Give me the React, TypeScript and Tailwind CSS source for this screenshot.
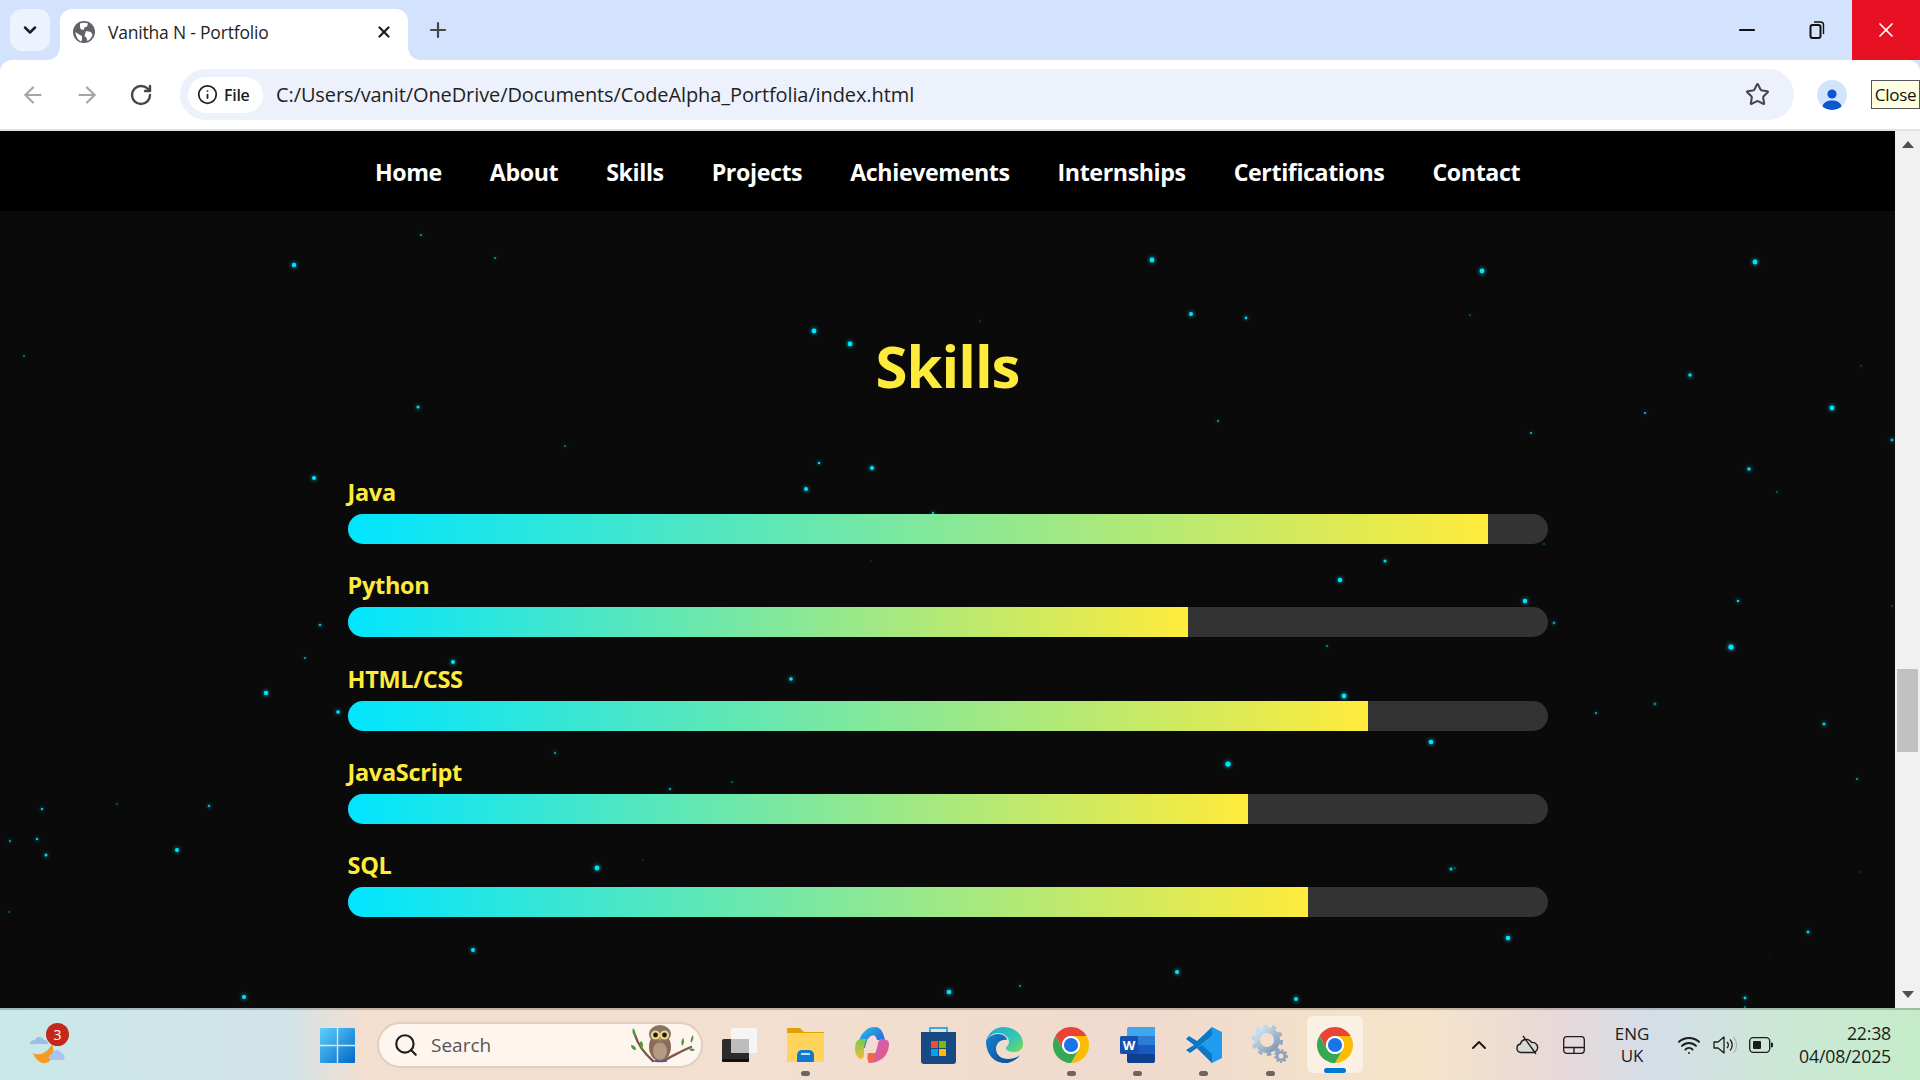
import { ArrowLeft, ArrowRight, ChevronDown, ChevronUp, Info, Minus, Plus, RotateCw, Search, Star, Wifi, X } from "lucide-react";

const navLinks = ["Home", "About", "Skills", "Projects", "Achievements", "Internships", "Certifications", "Contact"];

const skills = [
    { name: "Java", level: 95 },
    { name: "Python", level: 70 },
    { name: "HTML/CSS", level: 85 },
    { name: "JavaScript", level: 75 },
    { name: "SQL", level: 80 },
];

// x, y (page coordinates), radius, opacity
const particles: [number, number, number, number][] = [
    [421, 235, 1, 0.7], [495, 258, 1, 0.7], [294, 265, 2.2, 1], [24, 356, 1, 0.5], [418, 407, 1.6, 0.9], [565, 446, 1, 0.5], [314, 478, 2, 1],
    [1152, 260, 2.4, 1], [1191, 314, 2, 1], [1246, 318, 1.4, 0.9], [814, 331, 2.4, 1], [850, 344, 2.4, 1], [980, 321, 0.7, 0.5], [1218, 421, 1.1, 0.7], [819, 463, 1.3, 0.9], [872, 468, 2, 1], [806, 489, 2, 1],
    [1482, 271, 2.4, 1], [1755, 262, 2.4, 1], [1470, 315, 1, 0.35], [1690, 375, 1.8, 0.9], [1861, 366, 1, 0.3], [1645, 413, 1, 0.9], [1531, 433, 1, 0.9], [1832, 408, 2.4, 1], [1892, 440, 1.4, 0.8], [1749, 469, 1.8, 0.9], [1777, 492, 1, 0.4], [1544, 544, 1, 0.35], [1385, 561, 1.6, 0.9], [1340, 580, 2.2, 1], [1525, 601, 2.2, 1], [1738, 601, 1.3, 0.9], [1892, 606, 1, 0.3],
    [1731, 647, 2.6, 1], [1554, 623, 1.4, 0.6], [1596, 713, 1.1, 0.8], [1655, 704, 1.4, 0.5], [1824, 724, 1.5, 0.9], [1431, 742, 2.3, 1], [1857, 779, 1, 0.7],
    [320, 625, 1.3, 0.8], [305, 658, 1, 0.8], [453, 662, 2, 1], [266, 693, 2.2, 1], [338, 712, 1.8, 1], [555, 753, 1.2, 0.6], [42, 809, 1.3, 0.8], [117, 804, 1, 0.35], [209, 806, 1.3, 0.8], [10, 841, 1.2, 0.6], [37, 839, 1.3, 0.8], [46, 855, 1.5, 0.9], [177, 850, 2, 1], [9, 912, 0.9, 0.4], [597, 868, 2.4, 1], [473, 950, 2, 1], [244, 997, 2, 1],
    [1327, 646, 1.1, 0.6], [791, 679, 1.8, 1], [1344, 696, 2.4, 1], [1228, 764, 2.6, 1], [732, 782, 0.9, 0.5], [670, 789, 1.2, 0.7], [643, 860, 0.7, 0.3], [1451, 869, 1.5, 0.9], [1455, 868, 0.9, 0.4], [1860, 872, 0.7, 0.4], [1508, 938, 2.3, 1], [1808, 932, 1.4, 0.9], [1770, 954, 0.6, 0.3], [1177, 972, 2, 1], [1020, 986, 1, 0.7], [949, 992, 2.3, 1], [1296, 999, 2, 1], [1745, 998, 1.4, 0.9], [1745, 1007, 1, 0.6], [933, 513, 1.3, 0.8], [871, 561, 0.7, 0.35],
];

function ChromeIcon() {
    return (
        <svg viewBox="0 0 24 24" className="w-9 h-9">
            <path fill="#ea4335" d="M12 6H22.39A12 12 0 0 0 1.61 6L6.8 15A6 6 0 0 1 12 6Z" />
            <path fill="#fbbc04" d="M17.2 15L12 24A12 12 0 0 0 22.39 6H12A6 6 0 0 1 17.2 15Z" />
            <path fill="#34a853" d="M6.8 15L1.61 6A12 12 0 0 0 12 24L17.2 15A6 6 0 0 1 6.8 15Z" />
            <circle cx="12" cy="12" r="6" fill="#fff" />
            <circle cx="12" cy="12" r="4.7" fill="#1a73e8" />
        </svg>
    );
}

function WeatherIcon() {
    return (
        <svg viewBox="0 0 36 42" className="w-9 h-[42px]">
            <path fill="#f59a23" d="M3 29c5 3 14 1 19-9 3 8 1 17-6 19-6 1-11-4-13-10Z" />
            <path fill="#9dbcec" d="M0 21c0-3 3-4 5-4 1-4 7-4 9 0 3 0 4 2 4 4Z" transform="translate(0 -1)" />
            <path fill="#a9c4f0" d="M15 38c-3 0-3-6 1-6 1-5 8-5 9-1 4 0 5 7 1 7Z" transform="translate(6 -2)" />
        </svg>
    );
}

function WindowsLogo() {
    return (
        <svg viewBox="0 0 35 35" className="w-[35px] h-[35px]">
            <defs>
                <linearGradient id="win" x1="0" y1="0" x2="1" y2="1">
                    <stop offset="0" stopColor="#5ed0fb" />
                    <stop offset="1" stopColor="#0068c8" />
                </linearGradient>
            </defs>
            <path fill="url(#win)" d="M1 0h15.8v16.8H0V1a1 1 0 0 1 1-1ZM18.2 0H34a1 1 0 0 1 1 1v15.8H18.2ZM0 18.2h16.8V35H1a1 1 0 0 1-1-1ZM18.2 18.2H35V34a1 1 0 0 1-1 1H18.2Z" />
        </svg>
    );
}

function OwlIcon() {
    return (
        <svg viewBox="0 0 68 44" className="w-[68px] h-11">
            <path d="M6 12c3 10 8 17 18 26M62 24c-8 3-16 8-28 14h-6" fill="none" stroke="#7b5a45" strokeWidth="2.4" strokeLinecap="round" />
            <path d="M4 5c3 3 3 6 2 9-3-3-3-6-2-9ZM2 22c4 0 5 3 5 5-3 0-5-2-5-5ZM12 18c3 2 2 6 1 8-2-3-3-6-1-8ZM54 15c2 3 1 6-1 8-1-3-1-6 1-8ZM64 12c1 3 0 6-2 8-1-3 0-6 2-8ZM60 26c3-1 5 0 6 1-2 2-5 1-6-1Z" fill="#4f9a3d" />
            <ellipse cx="31" cy="24" rx="11" ry="14" fill="#8a6a55" />
            <ellipse cx="31" cy="28" rx="7" ry="9" fill="#b49a80" />
            <ellipse cx="31" cy="11" rx="11" ry="9" fill="#8b735f" />
            <circle cx="26.5" cy="12" r="4.6" fill="#ecd98a" />
            <circle cx="35.5" cy="12" r="4.6" fill="#ecd98a" />
            <circle cx="26.5" cy="12" r="2.4" fill="#1f1a16" />
            <circle cx="35.5" cy="12" r="2.4" fill="#1f1a16" />
            <path d="M31 14l-1.4 2 1.4 2 1.4-2Z" fill="#d2a042" />
            <path d="M26 38h4M33 38h4" stroke="#4e5aa8" strokeWidth="2" strokeLinecap="round" />
        </svg>
    );
}

function TaskViewIcon() {
    return (
        <svg viewBox="0 0 36 36" className="w-9 h-9">
            <rect x="1" y="12" width="27" height="23" rx="2" fill="#2c2c2c" />
            <rect x="1" y="32" width="27" height="3" rx="1" fill="#111" />
            <rect x="10" y="1" width="26" height="25" rx="1.5" fill="#f7f7f7" fillOpacity="0.9" />
            <rect x="10" y="12" width="18" height="14" fill="#bdbdbd" />
        </svg>
    );
}

function ExplorerIcon() {
    return (
        <svg viewBox="0 0 37 34" className="w-[37px] h-[34px]">
            <path fill="#e0a000" d="M1 0h12l4 4h19a1 1 0 0 1 1 1v6H0V1a1 1 0 0 1 1-1Z" />
            <path fill="#ffd35c" d="M0 5h37v29H0Z" />
            <path fill="#0f79d0" d="M10 34V27a5 5 0 0 1 5-5h7a5 5 0 0 1 5 5v7Z" />
            <rect x="14" y="25" width="9" height="2" fill="#bfe3ff" />
        </svg>
    );
}

function CopilotIcon() {
    return (
        <svg viewBox="0 0 36 36" className="w-9 h-9">
            <defs>
                <linearGradient id="copA" x1="0" y1="0" x2="1" y2="1">
                    <stop offset="0" stopColor="#27c5e8" />
                    <stop offset="1" stopColor="#2b50d8" />
                </linearGradient>
                <linearGradient id="copB" x1="0" y1="0" x2="1" y2="1">
                    <stop offset="0" stopColor="#c45fd8" />
                    <stop offset="1" stopColor="#e85c70" />
                </linearGradient>
                <linearGradient id="copC" x1="0" y1="0" x2="0" y2="1">
                    <stop offset="0" stopColor="#6fcf4f" />
                    <stop offset="1" stopColor="#f5b73c" />
                </linearGradient>
            </defs>
            <path fill="url(#copA)" d="M12 3c2-2 5-3 9-3 6 0 8 5 10 13H23c-1-4-3-6-6-4-4 2-5 8-6 12H3C4 14 7 7 12 3Z" />
            <path fill="url(#copC)" d="M2 16c1-3 3-4 6-4h5c-3 4-3 10-3 15 0 3-1 5-4 5-5-3-6-10-4-16Z" />
            <path fill="url(#copB)" d="M26 12c4 0 9 0 9 5 0 7-4 14-9 16-3 2-7 3-10 3-1 0-1 0-2-1 5-1 7-8 9-14 1-4 1-7 3-9Z" />
            <path fill="#f26a3e" d="M14 26h8c-1 4-3 8-6 10-3-2-3-6-2-10Z" />
        </svg>
    );
}

function StoreIcon() {
    return (
        <svg viewBox="0 0 35 38" className="w-[35px] h-[38px]">
            <path d="M9 7V2h17v5" fill="none" stroke="#2bb0e8" strokeWidth="2" />
            <path fill="#174a85" d="M0 6h35v29a3 3 0 0 1-3 3H3a3 3 0 0 1-3-3Z" />
            <rect x="10" y="15" width="7" height="7" fill="#f25022" />
            <rect x="18" y="15" width="7" height="7" fill="#7fba00" />
            <rect x="10" y="23" width="7" height="7" fill="#00a4ef" />
            <rect x="18" y="23" width="7" height="7" fill="#ffb900" />
        </svg>
    );
}

function EdgeIcon() {
    return (
        <svg viewBox="0 0 37 36" className="w-[37px] h-9">
            <defs>
                <linearGradient id="edgeA" x1="0" y1="0" x2="1" y2="0.8">
                    <stop offset="0" stopColor="#1fa7dc" />
                    <stop offset="0.7" stopColor="#36c9b0" />
                    <stop offset="1" stopColor="#70d860" />
                </linearGradient>
                <linearGradient id="edgeB" x1="0" y1="0" x2="1" y2="1">
                    <stop offset="0" stopColor="#1781d0" />
                    <stop offset="1" stopColor="#0b4f9c" />
                </linearGradient>
            </defs>
            <path fill="url(#edgeA)" d="M18 0c11 0 19 8 19 17 0 5-4 8-9 8-4 0-8-1-8-4 0-2 3-2 3-6 0-5-5-9-11-9C7 6 3 9 0 14 2 6 9 0 18 0Z" />
            <path fill="url(#edgeB)" d="M0 14c3-5 8-7 12-7 5 0 9 3 9 6-6-1-11 3-11 9 0 7 6 12 14 14-1 0-3 0-5 0C8 36 0 27 0 14Z" />
            <path fill="#0c59a4" d="M34 28c-3 5-9 8-15 8-6-2-9-7-9-14 0 6 5 10 12 10 5 0 9-1 12-4Z" />
        </svg>
    );
}

function WordIcon() {
    return (
        <svg viewBox="0 0 35 36" className="w-[35px] h-9">
            <path fill="#41a5ee" d="M9 0h26v9H7V2a2 2 0 0 1 2-2Z" />
            <rect x="7" y="9" width="28" height="9" fill="#2b7cd3" />
            <rect x="7" y="18" width="28" height="9" fill="#185abd" />
            <path fill="#103f91" d="M7 27h28v7a2 2 0 0 1-2 2H9a2 2 0 0 1-2-2Z" />
            <rect x="0" y="9" width="18" height="18" rx="1.5" fill="#1550ae" />
            <text x="9" y="23" textAnchor="middle" fill="#fff" fontSize="13" fontWeight="700" fontFamily="Open Sans, sans-serif">W</text>
        </svg>
    );
}

function VsCodeIcon() {
    return (
        <svg viewBox="0 0 36 36" className="w-9 h-9">
            <path fill="#1f9cf0" d="M26 0l10 5v26l-10 5-15-15 15-12V0Z" />
            <path fill="#0a78c4" d="M26 0v9L11 21l-7 5-4-3 8-5-8-6 3-3 8 5ZM26 27v9L11 21l5-3Z" />
        </svg>
    );
}

function SettingsIcon() {
    return (
        <svg viewBox="0 0 36 40" className="w-9 h-10">
            <defs>
                <linearGradient id="gear" x1="0" y1="0" x2="1" y2="1">
                    <stop offset="0" stopColor="#cfe8f7" />
                    <stop offset="1" stopColor="#7d96b0" />
                </linearGradient>
            </defs>
            <circle cx="15" cy="15" r="10" fill="none" stroke="url(#gear)" strokeWidth="6" />
            <circle cx="15" cy="15" r="14" fill="none" stroke="url(#gear)" strokeWidth="4" strokeDasharray="4.4 4.4" />
            <circle cx="29" cy="31" r="4" fill="none" stroke="#8ea3b8" strokeWidth="3" />
            <circle cx="29" cy="31" r="6" fill="none" stroke="#8ea3b8" strokeWidth="2" strokeDasharray="2 2" />
        </svg>
    );
}

function CloudOffIcon() {
    return (
        <svg viewBox="0 0 24 20" className="w-6 h-5">
            <path d="M6 17.5a4.3 4.3 0 0 1-.6-8.5A6 6 0 0 1 16.5 7.5a4.6 4.6 0 0 1 2 10Z" fill="#d8d8d8" stroke="#1c1c1c" strokeWidth="1.4" />
            <path d="M8 1l13 18" stroke="#1c1c1c" strokeWidth="1.4" />
        </svg>
    );
}

function TouchpadIcon() {
    return (
        <svg viewBox="0 0 22 18" className="w-[22px] h-[18px]" fill="none" stroke="#1c1c1c" strokeWidth="1.3">
            <rect x="0.7" y="0.7" width="20.6" height="16.6" rx="3" />
            <path d="M0.7 11.5h20.6M11 11.5v5.8" />
        </svg>
    );
}

function VolumeIcon() {
    return (
        <svg viewBox="0 0 24 18" className="w-6 h-[18px]" fill="none" stroke="#1c1c1c" strokeWidth="1.3">
            <path d="M1 6h4l6-5v16l-6-5H1Z" strokeLinejoin="round" />
            <path d="M14 6a4 4 0 0 1 0 6M17 3.500a8 8 0 0 1 0 11" />
            <path d="M20.500 1a12 12 0 0 1 0 16" stroke="#b5b5b5" />
        </svg>
    );
}

function BatteryIcon() {
    return (
        <svg viewBox="0 0 24 16" className="w-6 h-4">
            <rect x="0.7" y="0.7" width="20" height="14.6" rx="3.5" fill="none" stroke="#1c1c1c" strokeWidth="1.3" />
            <rect x="4" y="4" width="8" height="8" rx="1" fill="#1c1c1c" />
            <path d="M22 5.5a2.4 2.4 0 0 1 0 5Z" fill="#1c1c1c" />
        </svg>
    );
}

function GlobeIcon() {
    return (
        <svg viewBox="0 0 22 22" className="w-[22px] h-[22px]">
            <circle cx="11" cy="11" r="11" fill="#5f6368" />
            <path fill="#fff" d="M7 2.5c3-1 6-1 8 0l-1 3-2.500 1-1 2.500-3-1-.5-2.500ZM13 10l5 1 1.500 3c-1 3-3 5-5 6l-1-3-2-2ZM2.500 11l4.500 3 2 1v4l-1 1.500C5 19 2.500 15 2.500 11Z" />
        </svg>
    );
}

export default function App() {
    return (
        <div className="h-screen w-full overflow-hidden flex flex-col bg-[#d3e3fd] font-['Open_Sans',sans-serif] text-[#1f1f1f]">
            {/* Tab strip */}
            <div className="h-[60px] shrink-0 flex items-end">
                <div className="ml-[10px] mb-[9px] w-10 h-[42px] rounded-xl bg-[#ecf2fe] flex items-center justify-center">
                    <ChevronDown className="w-5 h-5 text-[#1f1f1f]" strokeWidth={3} />
                </div>
                <div className="relative ml-[10px] w-[348px] h-[51px] bg-white rounded-t-xl flex items-center pl-[13px] pb-[5px]">
                    <span className="absolute -left-3 bottom-0 w-3 h-3 bg-[radial-gradient(circle_at_0_0,transparent_11.5px,white_12px)]" />
                    <span className="absolute -right-3 bottom-0 w-3 h-3 bg-[radial-gradient(circle_at_100%_0,transparent_11.5px,white_12px)]" />
                    <GlobeIcon />
                    <span className="ml-[13px] text-[17.5px] tracking-[-0.2px] text-[#1f1f1f]">Vanitha N - Portfolio</span>
                    <X className="ml-auto mr-[15px] w-[18px] h-[18px] text-[#1f1f1f]" strokeWidth={3} />
                </div>
                <div className="ml-[18px] mb-[9px] w-6 h-[42px] flex items-center justify-center">
                    <Plus className="w-6 h-6 text-[#474747]" strokeWidth={2.2} />
                </div>
                <div className="ml-auto h-[60px] flex items-center">
                    <div className="w-[70px] flex justify-center">
                        <Minus className="w-6 h-6 text-[#111]" strokeWidth={2.2} />
                    </div>
                    <div className="w-[70px] flex justify-center">
                        <svg viewBox="0 0 16 18" className="w-4 h-[18px]" fill="none" stroke="#111" strokeWidth="2">
                            <rect x="1.5" y="4" width="10" height="13" rx="2" />
                            <path d="M5 1h6.500a3 3 0 0 1 3 3v9" strokeWidth="1.400" />
                        </svg>
                    </div>
                    <div className="w-[68px] h-[60px] bg-[#e81123] flex items-center justify-center">
                        <X className="w-6 h-6 text-white" strokeWidth={1.7} />
                    </div>
                </div>
            </div>

            {/* Toolbar */}
            <div className="h-[71px] shrink-0 bg-white rounded-t-xl border-b-2 border-[#e3e3e3] flex items-center relative">
                <ArrowLeft className="ml-[20px] w-[26px] h-[26px] text-[#a6a6a6]" strokeWidth={2} />
                <ArrowRight className="ml-7 w-[26px] h-[26px] text-[#a6a6a6]" strokeWidth={2} />
                <RotateCw className="ml-[29px] w-6 h-6 text-[#474747]" strokeWidth={2.4} />
                <div className="ml-[27px] w-[1614px] h-[51px] rounded-full bg-[#ecf1fb] flex items-center pl-2">
                    <div className="w-[75px] h-9 rounded-full bg-white flex items-center pl-[9px]">
                        <Info className="w-[21px] h-[21px] text-[#1f1f1f]" strokeWidth={2} />
                        <span className="ml-[6px] text-[16px] font-semibold tracking-[-0.3px]">File</span>
                    </div>
                    <span className="ml-[13px] text-[20px] tracking-[-0.1px] text-[#1f1f1f]">C:/Users/vanit/OneDrive/Documents/CodeAlpha_Portfolia/index.html</span>
                    <Star className="ml-auto mr-6 w-[25px] h-[25px] text-[#474747]" strokeWidth={2} />
                </div>
                <div className="ml-[23px] w-[30px] h-[30px] rounded-full bg-[#d3e3fd] flex items-end justify-center overflow-hidden">
                    <svg viewBox="0 0 20 22" className="w-5 h-[22px]" fill="#0b57d0">
                        <circle cx="10" cy="6" r="4.600" />
                        <path d="M0 22c0-7 4-9.500 10-9.500s10 2.500 10 9.500Z" />
                    </svg>
                </div>
                <div className="absolute right-0 top-[20px] w-[49px] h-[29px] bg-[#ffffe1] border border-[#555] text-[17px] leading-[27px] text-center tracking-[-0.3px] text-[#111]">Close</div>
            </div>

            {/* Page and scrollbar */}
            <div className="flex-1 min-h-0 flex">
                <main className="relative flex-1 min-w-0 bg-[#0a0a0a] overflow-hidden">
                    <svg className="absolute left-0 -top-[131px] w-[1895px] h-[1008px] drop-shadow-[0_0_2px_#00e5ff]" viewBox="0 0 1895 1008">
                        {particles.map(([x, y, r, o], i) => (
                            <circle key={i} cx={x} cy={y} r={r} fill="#00e5ff" opacity={o} />
                        ))}
                    </svg>
                    <nav className="relative h-20 pt-[3px] bg-black flex items-center justify-center gap-12">
                        {navLinks.map((link) => (
                            <a key={link} className="text-[23.2px] font-bold text-white tracking-[-0.4px]">{link}</a>
                        ))}
                    </nav>
                    <section className="relative flex flex-col items-center">
                        <h2 className="mt-[114px] text-[58px] leading-[82px] font-bold text-[#ffeb3b] tracking-[-1px]">Skills</h2>
                        <div className="mt-[69px] w-[1200px] flex flex-col gap-[25.33px]">
                            {skills.map((skill) => (
                                <div key={skill.name}>
                                    <div className="h-8 mb-[6px] text-[23.5px] leading-8 font-bold text-[#ffeb3b] tracking-[-0.3px]">{skill.name}</div>
                                    <div className="h-[30px] rounded-[15px] bg-[#333] overflow-hidden">
                                        <div className="h-full bg-[linear-gradient(90deg,#00e5ff,#ffeb3b)]" style={{ width: `${skill.level}%` }} />
                                    </div>
                                </div>
                            ))}
                        </div>
                    </section>
                </main>
                <div className="w-[25px] shrink-0 bg-[#f1f1f1] flex flex-col items-center">
                    <div className="mt-[10px] w-0 h-0 border-x-[6px] border-x-transparent border-b-[7px] border-b-[#505050]" />
                    <div className="mt-[521px] w-[21px] h-[83px] bg-[#c1c1c1]" />
                    <div className="mt-auto mb-[10px] w-0 h-0 border-x-[6px] border-x-transparent border-t-[7px] border-t-[#505050]" />
                </div>
            </div>

            {/* Taskbar */}
            <div className="h-[72px] shrink-0 border-t-2 border-black/20 bg-[linear-gradient(90deg,#c9e8e8_0%,#d2e3e8_15%,#f3dfd0_19%,#f3dfcf_40%,#efdacd_60%,#f6e4c9_74%,#e8d8d8_81%,#d5dee8_86%,#cbe8d5_93%,#c5ecc8_100%)] flex items-center">
                <div className="relative ml-[30px] w-9 h-[42px]">
                    <WeatherIcon />
                    <span className="absolute -right-[3px] -top-[1px] w-[23px] h-[23px] rounded-full bg-[#c4281c] text-white text-[14px] leading-[23px] text-center">3</span>
                </div>
                <div className="ml-[254px]">
                    <WindowsLogo />
                </div>
                <div className="ml-[22px] w-[326px] h-[46px] rounded-full bg-[#fdf5ee] border-2 border-[#e0d0bf] flex items-center pl-[14px]">
                    <Search className="w-[26px] h-[26px] text-[#1f1f1f]" strokeWidth={2} />
                    <span className="ml-[12px] text-[19px] text-[#555]">Search</span>
                    <div className="ml-auto mr-[4px]">
                        <OwlIcon />
                    </div>
                </div>
                <div className="ml-[3px] flex">
                    {[
                        { icon: <TaskViewIcon />, dot: false },
                        { icon: <ExplorerIcon />, dot: true },
                        { icon: <CopilotIcon />, dot: false },
                        { icon: <StoreIcon />, dot: false },
                        { icon: <EdgeIcon />, dot: false },
                        { icon: <ChromeIcon />, dot: true },
                        { icon: <WordIcon />, dot: true },
                        { icon: <VsCodeIcon />, dot: true },
                        { icon: <SettingsIcon />, dot: true },
                    ].map((item, i) => (
                        <div key={i} className="relative w-[66.400px] h-[70px] flex items-center justify-center">
                            {item.icon}
                            {item.dot && <span className="absolute bottom-[4px] w-[9px] h-[5px] rounded-full bg-[#6b6460]" />}
                        </div>
                    ))}
                    <div className="relative w-[56px] h-[57px] ml-[3px] mt-[6px] rounded-md bg-[#faf0e3] flex items-center justify-center">
                        <ChromeIcon />
                        <span className="absolute -bottom-0 w-[22px] h-[5px] rounded-full bg-[#0078d4]" />
                    </div>
                </div>
                <div className="ml-auto flex items-center text-[#1c1c1c]">
                    <ChevronUp className="w-6 h-6" strokeWidth={2} />
                    <div className="ml-6"><CloudOffIcon /></div>
                    <div className="ml-6"><TouchpadIcon /></div>
                    <div className="ml-[27px] w-[40px] text-center text-[17px] leading-[22px]">
                        <div>ENG</div>
                        <div>UK</div>
                    </div>
                    <Wifi className="ml-[25px] w-6 h-6" strokeWidth={2} />
                    <div className="ml-3"><VolumeIcon /></div>
                    <div className="ml-3"><BatteryIcon /></div>
                    <div className="ml-[26px] mr-[29px] text-right text-[17.700px] leading-[23px] tracking-[-0.2px]">
                        <div>22:38</div>
                        <div>04/08/2025</div>
                    </div>
                </div>
            </div>
        </div>
    );
}
